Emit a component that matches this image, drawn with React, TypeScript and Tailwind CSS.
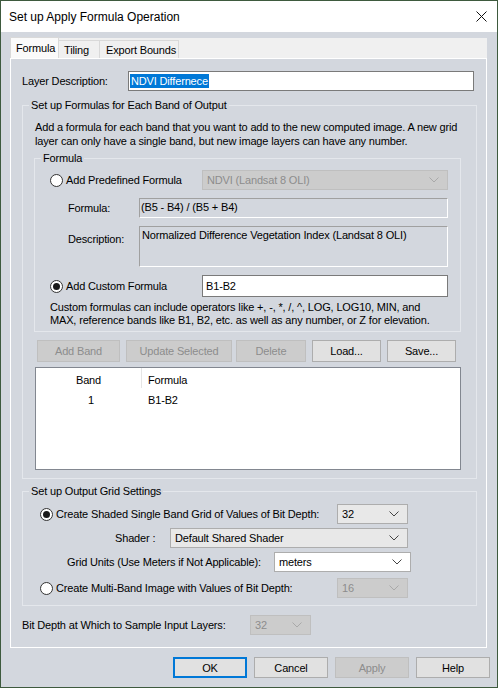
import clsx from "clsx"

function Chevron({ disabled }: { disabled?: boolean }) {
  return (
    <svg width="10" height="6" viewBox="0 0 10 6" className="shrink-0">
      <path d="M0.5 0.5 L5 5 L9.5 0.5" fill="none" stroke={disabled ? "#a9a9a9" : "#444444"} strokeWidth="1" />
    </svg>
  )
}

function Combo({ value, disabled, className }: { value: string; disabled?: boolean; className?: string }) {
  return (
    <div
      className={clsx(
        "flex h-[20px] shrink-0 items-center justify-between border pl-[4px] pr-[8px]",
        disabled ? "border-[#bfbfbf] bg-[#cccccc] text-[#8d8d8d]" : "border-[#adadad] bg-[#e8e8e8] text-black",
        className
      )}
    >
      <span>{value}</span>
      <Chevron disabled={disabled} />
    </div>
  )
}

function Radio({ checked }: { checked?: boolean }) {
  return (
    <span className="flex h-[13px] w-[13px] shrink-0 items-center justify-center rounded-full border border-[#333333] bg-white">
      {checked && <span className="h-[7px] w-[7px] rounded-full bg-[#1a1a1a]" />}
    </span>
  )
}

function Button({ label, disabled, focused, className }: { label: string; disabled?: boolean; focused?: boolean; className?: string }) {
  const look = disabled
    ? "border border-[#bfbfbf] bg-[#cccccc] text-[#8d8d8d]"
    : focused
      ? "border-2 border-[#0078d7] bg-[#e1e1e1] text-black"
      : "border border-[#adadad] bg-[#e1e1e1] text-black"
  return <div className={clsx("flex shrink-0 items-center justify-center whitespace-nowrap", look, className)}>{label}</div>
}

export default function App() {
  return (
    <div className="flex h-[688px] w-[498px] flex-col border border-[#3e5a3e] bg-[#d3d7de] font-['Liberation_Sans',Arial,sans-serif] text-[11px] leading-[14px] tracking-[-0.16px] text-black">
      {/* title bar */}
      <div className="flex h-[31px] shrink-0 items-center justify-between bg-white pl-[8px] pr-[10px]">
        <span className="text-[12px] tracking-normal">Set up Apply Formula Operation</span>
        <svg width="11" height="11" viewBox="0 0 11 11">
          <path d="M0.5 0.5 L10.5 10.5 M10.5 0.5 L0.5 10.5" stroke="#111" strokeWidth="1" />
        </svg>
      </div>

      {/* tabs */}
      <div className="ml-[9px] mt-[6px] flex h-[20px] w-[477px] items-end whitespace-nowrap bg-[#f0f0f0]">
        <div className="flex h-[21px] w-[49px] items-center border-x border-t border-[#d9d9d9] bg-[#fafafa] pl-[5px]">Formula</div>
        <div className="flex h-[18px] w-[41px] items-center border-r border-t border-[#d9d9d9] pl-[5px]">Tiling</div>
        <div className="flex h-[18px] w-[79px] items-center border-r border-t border-[#d9d9d9] pl-[6px]">Export Bounds</div>
      </div>

      {/* tab panel */}
      <div className="ml-[9px] flex h-[590px] w-[477px] flex-col border border-white pl-[11px] pr-[9px]">
        <div className="mt-[12px] flex h-[20px] items-center">
          <span className="w-[106px]">Layer Description:</span>
          <div className="flex h-[20px] w-[346px] items-center border border-[#7a7a7a] bg-white pl-[1px]">
            <span className="bg-[#0078d7] px-[1px] text-white">NDVI Differnece</span>
          </div>
        </div>

        <fieldset className="mt-[7px] border border-[#e4e7ec] pb-[8px]">
          <legend className="ml-[6px] px-[2px]">Set up Formulas for Each Band of Output</legend>
          <p className="mt-[8px] pl-[12px]">
            Add a formula for each band that you want to add to the new computed image. A new grid
            <br />
            layer can only have a single band, but new image layers can have any number.
          </p>

          <fieldset className="ml-[11px] mt-[3px] w-[427px] border border-[#e4e7ec] pb-[4px]">
            <legend className="ml-[6px] px-[2px]">Formula</legend>
            <div className="mt-[5px] flex h-[20px] items-center pl-[15px]">
              <div className="flex w-[152px] items-center gap-[3px]">
                <Radio />
                <span>Add Predefined Formula</span>
              </div>
              <Combo value="NDVI (Landsat 8 OLI)" disabled className="w-[246px]" />
            </div>
            <div className="mt-[8px] flex h-[20px] items-center pl-[33px]">
              <span className="w-[71px]">Formula:</span>
              <div className="h-[20px] w-[309px] border-b border-l border-r border-t border-b-white border-l-[#a0a0a0] border-r-white border-t-[#a0a0a0] pl-[1px] pt-[1px]">
                (B5 - B4) / (B5 + B4)
              </div>
            </div>
            <div className="mt-[8px] flex items-start pl-[33px]">
              <span className="mt-[6px] w-[71px]">Description:</span>
              <div className="h-[41px] w-[309px] border-b border-l border-r border-t border-b-white border-l-[#a0a0a0] border-r-white border-t-[#a0a0a0] pl-[2px] pt-[1px]">
                Normalized Difference Vegetation Index (Landsat 8 OLI)
              </div>
            </div>
            <div className="mt-[8px] flex h-[22px] items-center pl-[15px]">
              <div className="flex w-[152px] items-center gap-[3px]">
                <Radio checked />
                <span>Add Custom Formula</span>
              </div>
              <div className="flex h-[22px] w-[246px] items-center border border-[#7a7a7a] bg-white pl-[3px]">B1-B2</div>
            </div>
            <p className="mt-[4px] pl-[15px] leading-[13px]">
              Custom formulas can include operators like +, -, *, /, ^, LOG, LOG10, MIN, and
              <br />
              MAX, reference bands like B1, B2, etc. as well as any number, or Z for elevation.
            </p>
          </fieldset>

          <div className="ml-[14px] mt-[8px] flex h-[22px]">
            <Button label="Add Band" disabled className="w-[83px]" />
            <Button label="Update Selected" disabled className="ml-[6px] w-[106px]" />
            <Button label="Delete" disabled className="ml-[4px] w-[70px]" />
            <Button label="Load..." className="ml-[6px] w-[69px]" />
            <Button label="Save..." className="ml-[6px] w-[69px]" />
          </div>

          <div className="ml-[12px] mt-[5px] h-[103px] w-[426px] border border-[#828790] bg-white">
            <div className="flex h-[23px] items-center">
              <span className="w-[105px] text-center">Band</span>
              <span className="h-[20px] w-px self-start bg-[#e5e5e5]" />
              <span className="pl-[6px]">Formula</span>
            </div>
            <div className="flex h-[17px] items-center">
              <span className="w-[110px] text-center">1</span>
              <span className="pl-[2px]">B1-B2</span>
            </div>
          </div>
        </fieldset>

        <fieldset className="mt-[5px] border border-[#e4e7ec] pb-[7px]">
          <legend className="ml-[6px] px-[2px]">Set up Output Grid Settings</legend>
          <div className="mt-[6px] flex h-[20px] items-center pl-[17px]">
            <div className="flex w-[297px] items-center gap-[3px]">
              <Radio checked />
              <span>Create Shaded Single Band Grid of Values of Bit Depth:</span>
            </div>
            <Combo value="32" className="w-[71px]" />
          </div>
          <div className="mt-[4px] flex h-[20px] items-center pl-[92px]">
            <span className="w-[55px]">Shader :</span>
            <Combo value="Default Shared Shader" className="w-[238px]" />
          </div>
          <div className="mt-[4px] flex h-[20px] items-center pl-[44px]">
            <span className="w-[207px]">Grid Units (Use Meters if Not Applicable):</span>
            <Combo value="meters" className="w-[137px] bg-white" />
          </div>
          <div className="mt-[6px] flex h-[20px] items-center pl-[17px]">
            <div className="flex w-[297px] items-center gap-[3px]">
              <Radio />
              <span>Create Multi-Band Image with Values of Bit Depth:</span>
            </div>
            <Combo value="16" disabled className="w-[71px]" />
          </div>
        </fieldset>

        <div className="mt-[9px] flex h-[20px] items-center">
          <span className="w-[228px]">Bit Depth at Which to Sample Input Layers:</span>
          <Combo value="32" disabled className="w-[61px]" />
        </div>
      </div>

      {/* dialog buttons */}
      <div className="mt-[9px] flex h-[21px] justify-end gap-[7px] pr-[7px]">
        <Button label="OK" focused className="w-[74px]" />
        <Button label="Cancel" className="w-[74px]" />
        <Button label="Apply" disabled className="w-[74px]" />
        <Button label="Help" className="w-[74px]" />
      </div>
    </div>
  )
}
